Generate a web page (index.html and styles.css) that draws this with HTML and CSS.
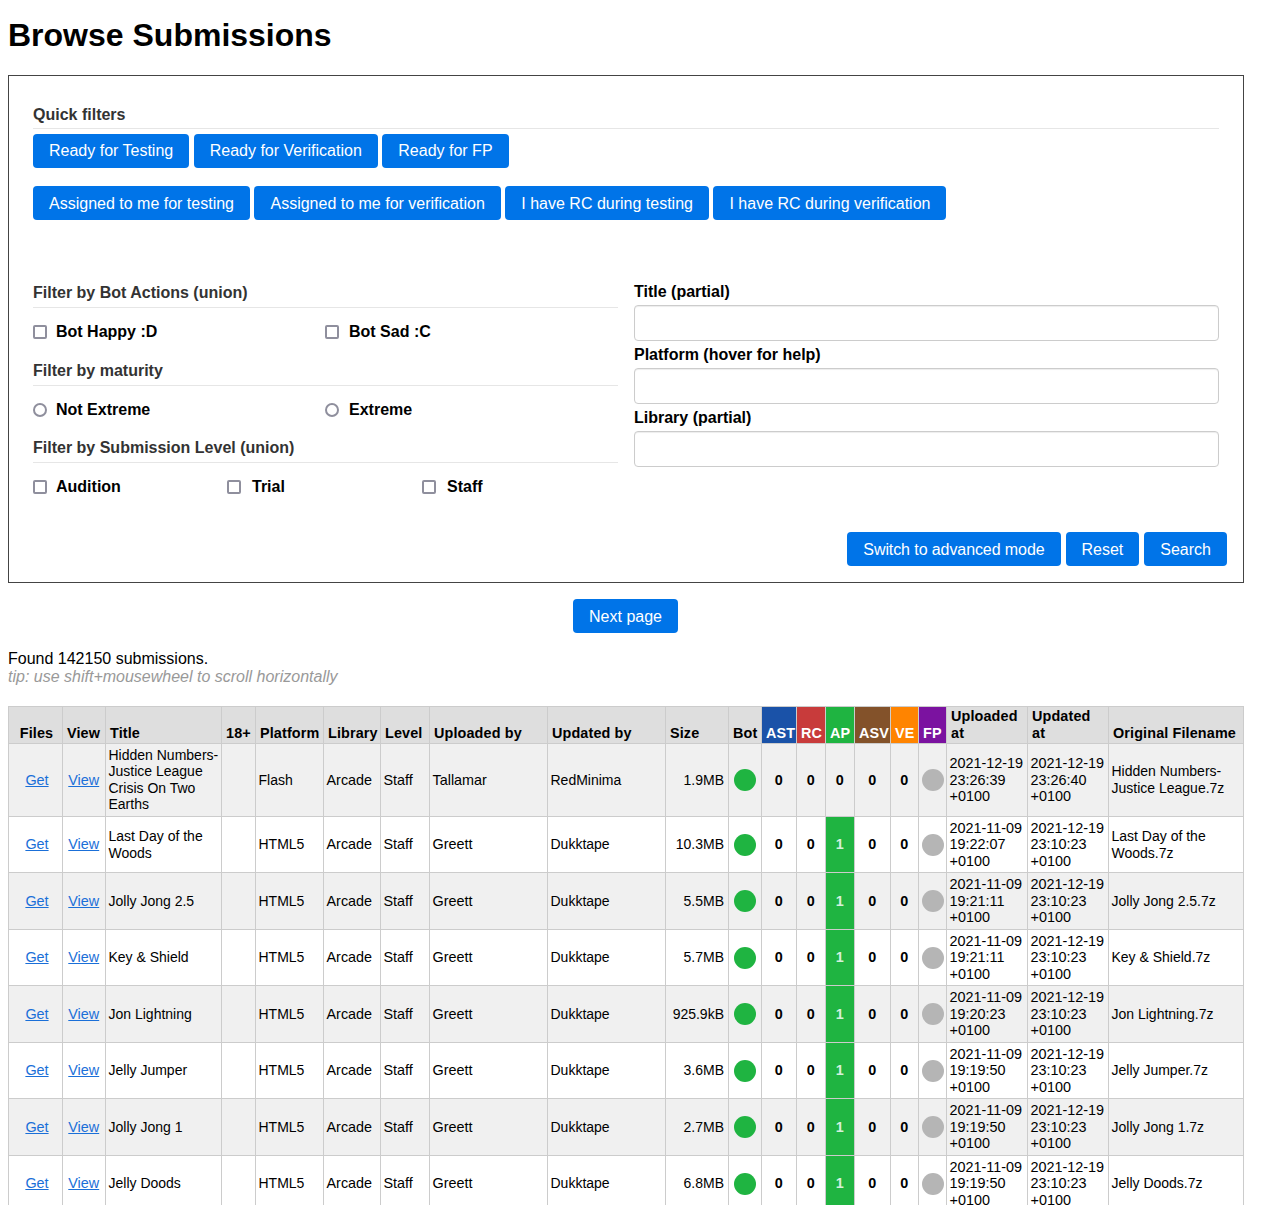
FILE: index.html
```html
<!DOCTYPE html>
<html lang="en">
<head>
<meta charset="utf-8">
<title>Browse Submissions</title>
<link rel="stylesheet" href="styles.css">
</head>
<body>
<main class="page">
  <h1 class="page-title">Browse Submissions</h1>
  <form class="search-box">
    <h2 class="section-title quick-title">Quick filters</h2>
    <div class="btn-row">
      <button type="button" class="btn">Ready for Testing</button>
      <button type="button" class="btn">Ready for Verification</button>
      <button type="button" class="btn">Ready for FP</button>
    </div>
    <div class="btn-row">
      <button type="button" class="btn">Assigned to me for testing</button>
      <button type="button" class="btn">Assigned to me for verification</button>
      <button type="button" class="btn">I have RC during testing</button>
      <button type="button" class="btn">I have RC during verification</button>
    </div>
    <div class="filter-grid">
      <div class="filter-col">
        <h2 class="section-title">Filter by Bot Actions (union)</h2>
        <div class="opt-row two">
          <label class="opt"><span class="box"></span>Bot Happy :D</label>
          <label class="opt"><span class="box"></span>Bot Sad :C</label>
        </div>
        <h2 class="section-title">Filter by maturity</h2>
        <div class="opt-row two">
          <label class="opt"><span class="box round"></span>Not Extreme</label>
          <label class="opt"><span class="box round"></span>Extreme</label>
        </div>
        <h2 class="section-title">Filter by Submission Level (union)</h2>
        <div class="opt-row three">
          <label class="opt"><span class="box"></span>Audition</label>
          <label class="opt"><span class="box"></span>Trial</label>
          <label class="opt"><span class="box"></span>Staff</label>
        </div>
      </div>
      <div class="field-col">
        <label class="field-label">Title (partial)</label>
        <input class="field-input" type="text">
        <label class="field-label">Platform (hover for help)</label>
        <input class="field-input" type="text">
        <label class="field-label">Library (partial)</label>
        <input class="field-input" type="text">
      </div>
    </div>
    <div class="form-actions">
      <button type="button" class="btn btn-tight">Switch to advanced mode</button>
      <button type="button" class="btn">Reset</button>
      <button type="button" class="btn">Search</button>
    </div>
  </form>
  <div class="pager"><button type="button" class="btn">Next page</button></div>
  <p class="found">Found 142150 submissions.</p>
  <p class="tip">tip: use shift+mousewheel to scroll horizontally</p>
  <table class="subs">
    <colgroup>
      <col class="c54"><col class="c43"><col class="c116"><col class="c34"><col class="c68"><col class="c57"><col class="c49"><col class="c118"><col class="c118"><col class="c63"><col class="c33"><col class="c35"><col class="c29"><col class="c29"><col class="c36"><col class="c28"><col class="c28"><col class="c81"><col class="c81"><col class="c135">
    </colgroup>
    <thead>
      <tr>
        <th class="ctr">Files</th><th>View</th><th>Title</th><th>18+</th><th>Platform</th><th>Library</th><th>Level</th><th>Uploaded by</th><th>Updated by</th><th>Size</th><th>Bot</th>
        <th class="h-ast">AST</th><th class="h-rc">RC</th><th class="h-ap">AP</th><th class="h-asv">ASV</th><th class="h-ve">VE</th><th class="h-fp">FP</th>
        <th>Uploaded at</th><th>Updated at</th><th>Original Filename</th>
      </tr>
    </thead>
    <tbody>
      <tr>
        <td class="ctr"><a href="#">Get</a></td><td class="ctr"><a href="#">View</a></td><td>Hidden Numbers-Justice League Crisis On Two Earths</td><td></td><td>Flash</td><td>Arcade</td><td>Staff</td><td>Tallamar</td><td>RedMinima</td><td class="num">1.9MB</td><td class="ctr"><span class="dot ok"></span></td>
        <td class="cnt">0</td><td class="cnt">0</td><td class="cnt">0</td><td class="cnt">0</td><td class="cnt">0</td><td class="ctr"><span class="dot off"></span></td>
        <td>2021-12-19 23:26:39 +0100</td><td>2021-12-19 23:26:40 +0100</td><td>Hidden Numbers-Justice League.7z</td>
      </tr>
      <tr>
        <td class="ctr"><a href="#">Get</a></td><td class="ctr"><a href="#">View</a></td><td>Last Day of the Woods</td><td></td><td>HTML5</td><td>Arcade</td><td>Staff</td><td>Greett</td><td>Dukktape</td><td class="num">10.3MB</td><td class="ctr"><span class="dot ok"></span></td>
        <td class="cnt">0</td><td class="cnt">0</td><td class="cnt on">1</td><td class="cnt">0</td><td class="cnt">0</td><td class="ctr"><span class="dot off"></span></td>
        <td>2021-11-09 19:22:07 +0100</td><td>2021-12-19 23:10:23 +0100</td><td>Last Day of the Woods.7z</td>
      </tr>
      <tr>
        <td class="ctr"><a href="#">Get</a></td><td class="ctr"><a href="#">View</a></td><td>Jolly Jong 2.5</td><td></td><td>HTML5</td><td>Arcade</td><td>Staff</td><td>Greett</td><td>Dukktape</td><td class="num">5.5MB</td><td class="ctr"><span class="dot ok"></span></td>
        <td class="cnt">0</td><td class="cnt">0</td><td class="cnt on">1</td><td class="cnt">0</td><td class="cnt">0</td><td class="ctr"><span class="dot off"></span></td>
        <td>2021-11-09 19:21:11 +0100</td><td>2021-12-19 23:10:23 +0100</td><td>Jolly Jong 2.5.7z</td>
      </tr>
      <tr>
        <td class="ctr"><a href="#">Get</a></td><td class="ctr"><a href="#">View</a></td><td>Key &amp; Shield</td><td></td><td>HTML5</td><td>Arcade</td><td>Staff</td><td>Greett</td><td>Dukktape</td><td class="num">5.7MB</td><td class="ctr"><span class="dot ok"></span></td>
        <td class="cnt">0</td><td class="cnt">0</td><td class="cnt on">1</td><td class="cnt">0</td><td class="cnt">0</td><td class="ctr"><span class="dot off"></span></td>
        <td>2021-11-09 19:21:11 +0100</td><td>2021-12-19 23:10:23 +0100</td><td>Key &amp; Shield.7z</td>
      </tr>
      <tr>
        <td class="ctr"><a href="#">Get</a></td><td class="ctr"><a href="#">View</a></td><td>Jon Lightning</td><td></td><td>HTML5</td><td>Arcade</td><td>Staff</td><td>Greett</td><td>Dukktape</td><td class="num">925.9kB</td><td class="ctr"><span class="dot ok"></span></td>
        <td class="cnt">0</td><td class="cnt">0</td><td class="cnt on">1</td><td class="cnt">0</td><td class="cnt">0</td><td class="ctr"><span class="dot off"></span></td>
        <td>2021-11-09 19:20:23 +0100</td><td>2021-12-19 23:10:23 +0100</td><td>Jon Lightning.7z</td>
      </tr>
      <tr>
        <td class="ctr"><a href="#">Get</a></td><td class="ctr"><a href="#">View</a></td><td>Jelly Jumper</td><td></td><td>HTML5</td><td>Arcade</td><td>Staff</td><td>Greett</td><td>Dukktape</td><td class="num">3.6MB</td><td class="ctr"><span class="dot ok"></span></td>
        <td class="cnt">0</td><td class="cnt">0</td><td class="cnt on">1</td><td class="cnt">0</td><td class="cnt">0</td><td class="ctr"><span class="dot off"></span></td>
        <td>2021-11-09 19:19:50 +0100</td><td>2021-12-19 23:10:23 +0100</td><td>Jelly Jumper.7z</td>
      </tr>
      <tr>
        <td class="ctr"><a href="#">Get</a></td><td class="ctr"><a href="#">View</a></td><td>Jolly Jong 1</td><td></td><td>HTML5</td><td>Arcade</td><td>Staff</td><td>Greett</td><td>Dukktape</td><td class="num">2.7MB</td><td class="ctr"><span class="dot ok"></span></td>
        <td class="cnt">0</td><td class="cnt">0</td><td class="cnt on">1</td><td class="cnt">0</td><td class="cnt">0</td><td class="ctr"><span class="dot off"></span></td>
        <td>2021-11-09 19:19:50 +0100</td><td>2021-12-19 23:10:23 +0100</td><td>Jolly Jong 1.7z</td>
      </tr>
      <tr>
        <td class="ctr"><a href="#">Get</a></td><td class="ctr"><a href="#">View</a></td><td>Jelly Doods</td><td></td><td>HTML5</td><td>Arcade</td><td>Staff</td><td>Greett</td><td>Dukktape</td><td class="num">6.8MB</td><td class="ctr"><span class="dot ok"></span></td>
        <td class="cnt">0</td><td class="cnt">0</td><td class="cnt on">1</td><td class="cnt">0</td><td class="cnt">0</td><td class="ctr"><span class="dot off"></span></td>
        <td>2021-11-09 19:19:50 +0100</td><td>2021-12-19 23:10:23 +0100</td><td>Jelly Doods.7z</td>
      </tr>
    </tbody>
  </table>
</main>
</body>
</html>
```
FILE: styles.css
```css
* { box-sizing: border-box; }
html, body { height: 1205px; overflow: hidden; }
body {
  margin: 0;
  padding: 8px;
  background: #fff;
  color: #000;
  font-family: "Liberation Sans", Arial, sans-serif;
  font-size: 16px;
}
.page { width: 1236px; }
.page-title {
  margin: 8.6px 0 21.6px;
  font-size: 32px;
  font-weight: 700;
  line-height: 36.8px;
}
.search-box {
  border: 1px solid #444;
  padding: 30px 24px 16px;
  height: 508px;
  display: flex;
  flex-direction: column;
}
.section-title {
  margin: 0;
  font-size: 16px;
  font-weight: 700;
  line-height: 18px;
  padding: 0 0 5px;
  color: #333;
  border-bottom: 1px solid #e6e6e6;
}
.quick-title { margin-bottom: 5px; padding-bottom: 4px; }
.btn-row { display: flex; gap: 4.5px; margin-bottom: 18px; }
.btn {
  height: 34px;
  padding: 2px 16px 0;
  border: 0;
  border-radius: 4px;
  background: #0074e8;
  color: #fff;
  font: 16px "Liberation Sans", Arial, sans-serif;
}
.quick-title + .btn-row .btn { padding-top: 1px; }
.btn-tight { letter-spacing: -0.09px; }
.filter-grid {
  display: grid;
  grid-template-columns: 585px 585px;
  gap: 16px;
  margin-top: 46px;
}
.opt-row { display: grid; margin: 15px 0 20.75px; }
.opt-row.two { grid-template-columns: 292px 1fr; }
.opt-row.three { grid-template-columns: 194px 195px 1fr; }
.opt {
  display: flex;
  align-items: center;
  font-weight: 700;
  line-height: 18px;
}
.box {
  width: 14px;
  height: 14px;
  margin-right: 9px;
  background: #fff;
  border: 2px solid #8f8f9d;
  border-radius: 2px;
}
.box.round { border-radius: 50%; }
.opt-row.two .opt + .opt .box { margin-right: 10px; }
.opt-row.three .opt + .opt .box { margin-right: 11px; }
.field-col { margin-top: -1px; }
.field-label {
  display: block;
  font-weight: 700;
  line-height: 18px;
  height: 22px;
}
.field-input {
  display: block;
  width: 100%;
  height: 36px;
  margin: 0 0 5px;
  border: 1px solid #ccc;
  border-radius: 4px;
  background: #fff;
  box-shadow: inset 0 1px 1px rgba(0, 0, 0, 0.075);
}
.form-actions {
  display: flex;
  justify-content: flex-end;
  gap: 5px;
  margin-top: auto;
  margin-right: -8px;
}
.pager { display: flex; justify-content: center; margin: 16px 0 17px; padding-right: 1px; }
.found { margin: 0; line-height: 18.4px; }
.tip { margin: 0 0 20px; line-height: 18px; color: #999; font-style: italic; }
.subs {
  table-layout: fixed;
  width: 1235px;
  border-collapse: collapse;
  font-size: 14.4px;
  line-height: 16.5px;
}
.c54 { width: 54px; } .c43 { width: 43px; } .c116 { width: 116px; } .c34 { width: 34px; }
.c68 { width: 68px; } .c57 { width: 57px; } .c49 { width: 49px; } .c118 { width: 118px; }
.c63 { width: 63px; } .c33 { width: 33px; } .c35 { width: 35px; } .c29 { width: 29px; }
.c36 { width: 36px; } .c28 { width: 28px; } .c81 { width: 81px; } .c135 { width: 135px; }
.subs th, .subs td { border: 1px solid #ccc; padding: 3px 3px 3px 2.5px; }
.subs th {
  padding: 1px 4px 1.5px;
  background: #dedede;
  font-weight: 700;
  text-align: left;
  vertical-align: bottom;
  letter-spacing: 0.13px;
  height: 36.5px;
}
.subs th:first-child { padding-left: 4px; padding-right: 2px; }
.subs td:first-child { padding-left: 5px; padding-right: 2px; }
.subs th.ctr { text-align: center; }
.subs td { vertical-align: middle; height: 56.5px; }
.subs td:nth-child(3), .subs td:nth-child(5), .subs td:nth-child(9), .subs td:nth-child(20), .subs td.num { font-size: 14px; }
.subs td:nth-child(3) { padding-right: 0; }
.subs tbody tr:nth-child(odd) td { background: #f0f0f0; }
.subs a { color: #1a6fd8; }
.ctr { text-align: center; }
.subs td.num { text-align: right; padding-right: 4px; }
.subs .h-ast { background: #1a52a8; color: #fff; }
.subs .h-rc { background: #c83b3b; color: #fff; }
.subs .h-ap { background: #1fb441; color: #fff; }
.subs .h-asv { background: #83522a; color: #fff; }
.subs .h-ve { background: #ff8400; color: #fff; }
.subs .h-fp { background: #7b12a0; color: #fff; }
.subs td.cnt { text-align: center; font-weight: 700; }
.subs tbody tr td.on { background: #1fb441; color: #d6f0dc; }
.dot { display: block; width: 22px; height: 22px; margin: 0 auto; border-radius: 50%; }
.dot.ok { background: #1fb441; }
.dot.off { background: #b5b5b5; }
```
